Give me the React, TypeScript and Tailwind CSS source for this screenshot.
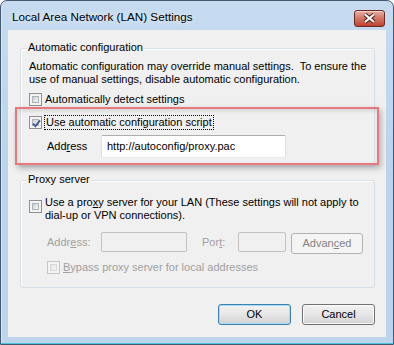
import type { ReactNode } from "react"

function CheckBox({ checked = false, disabled = false }: { checked?: boolean; disabled?: boolean }) {
  return (
    <span
      className={`relative flex h-[13px] w-[13px] shrink-0 items-center justify-center border bg-[#f4f4f4] p-[2px] ${
        disabled ? "border-[#c5c5c5]" : "border-[#8e8f8f]"
      }`}
    >
      <span
        className={`block h-full w-full border bg-gradient-to-br ${
          disabled
            ? "border-[#d8d8d8] from-[#e6e6e6] to-[#f6f6f6]"
            : "border-[#aeb3b9] from-[#cbcfd5] to-[#f6f6f6]"
        }`}
      />
      {checked && (
        <svg className="absolute left-[1px] top-[1px]" width="11" height="11" viewBox="0 0 11 11">
          <path d="M2 5.6 L4.4 8.2 L9 2.4" fill="none" stroke="#4a5f97" strokeWidth="1.9" />
        </svg>
      )}
    </span>
  )
}

function GroupBox({ title, height, children }: { title: string; height: string; children: ReactNode }) {
  return (
    <div
      className={`relative ml-[12px] w-[355px] rounded-[3px] border border-[#d5dfe5] shadow-[inset_1px_1px_0_#ffffff] ${height}`}
    >
      <span className="absolute -top-[8px] left-[6px] bg-[#f0f0f0] px-[1px] leading-[13px]">{title}</span>
      {children}
    </div>
  )
}

function WinButton({ label, focused = false }: { label: ReactNode; focused?: boolean }) {
  return (
    <div
      className={`flex h-[21px] w-[73px] items-center justify-center rounded-[3px] border bg-gradient-to-b from-[#f2f2f2] via-[#e6e6e6] to-[#d2d2d2] ${
        focused
          ? "border-[#3c7fb1] shadow-[inset_0_0_0_1px_#a6dcf6]"
          : "border-[#707070] shadow-[inset_0_0_0_1px_#fbfbfb]"
      }`}
    >
      {label}
    </div>
  )
}

export default function App() {
  return (
    <div className="h-[345px] w-[394px] bg-white font-['Liberation_Sans',Arial,sans-serif] text-[11px] text-black">
      <div className="flex h-[345px] w-[394px] flex-col rounded-t-[7px] border border-[#44586e] bg-gradient-to-b from-[#c6dbf0] via-[#bbd3eb] to-[#bcd4ec] shadow-[inset_0_-1px_0_#4cc3dc,inset_1px_0_0_#d8e7f5]">
        {/* title bar */}
        <div className="flex h-[29px] shrink-0 items-start justify-between">
          <span className="mt-[9px] pl-[11px] text-[11.7px] leading-[14px] [text-shadow:0_0_6px_#ffffff]">
            Local Area Network (LAN) Settings
          </span>
          <div className="mr-[8px] mt-[9px] h-[17px] w-[31px] rounded-[3px] border border-[#6b2a22] bg-gradient-to-b from-[#e4b0a6] via-[#d17565] to-[#c0402e] shadow-[inset_0_1px_0_#f2cfc8]">
            <svg width="29" height="15" viewBox="0 0 29 15">
              <path d="M10 3.5 L19 11 M19 3.5 L10 11" stroke="#4a1a14" strokeWidth="4.2" />
              <path d="M10 3.5 L19 11 M19 3.5 L10 11" stroke="#ffffff" strokeWidth="2.2" />
            </svg>
          </div>
        </div>

        {/* client area */}
        <div className="relative mx-[7px] h-[307px] bg-[#f0f0f0]">
          <div className="pt-[18px]">
            <GroupBox title="Automatic configuration" height="h-[119px]">
              <div className="mt-[11px] whitespace-nowrap pl-[8px] leading-[13px]">
                <div className="whitespace-pre">Automatic configuration may override manual settings.  To ensure the</div>
                <div>use of manual settings, disable automatic configuration.</div>
              </div>
              <div className="mt-[7px] flex h-[13px] items-center gap-[3px] pl-[8px] leading-[13px]">
                <CheckBox />
                <span>Automatically detect settings</span>
              </div>
              <div className="mt-[9px] flex h-[15px] items-center gap-[2px] pl-[8px] leading-[13px]">
                <CheckBox checked />
                <span className="border border-dotted border-black px-[1px]">Use automatic configuration script</span>
              </div>
              <div className="mt-[5px] flex h-[23px] items-center pl-[26px]">
                <span className="w-[54px]">
                  Add<span className="underline">r</span>ess
                </span>
                <div className="flex h-[23px] w-[185px] items-center rounded-[2px] border border-[#dbdfe6] border-t-[#abadb3] border-b-[#e3e9ef] bg-white pl-[5px]">
                  http://autoconfig/proxy.pac
                </div>
              </div>
            </GroupBox>

            <div className="mt-[13px]">
              <GroupBox title="Proxy server" height="h-[108px]">
                <div className="mt-[15px] flex items-start gap-[3px] pl-[8px] leading-[13px]">
                  <span className="mt-[4px]">
                    <CheckBox />
                  </span>
                  <div className="whitespace-nowrap">
                    <div>
                      Use a pro<span className="underline">x</span>y server for your LAN (These settings will not apply to
                    </div>
                    <div>dial-up or VPN connections).</div>
                  </div>
                </div>
                <div className="mt-[10px] flex h-[20px] items-start pl-[26px] text-[#a0a0a0]">
                  <span className="flex h-[20px] w-[54px] items-center">
                    Addr<span className="underline">e</span>ss:
                  </span>
                  <div className="h-[20px] w-[86px] rounded-[2px] border border-[#c2c2c2]" />
                  <span className="ml-[15px] flex h-[20px] w-[36px] items-center">
                    Por<span className="underline">t</span>:
                  </span>
                  <div className="h-[20px] w-[48px] rounded-[2px] border border-[#c2c2c2]" />
                  <div className="ml-[5px] mt-[1px] flex h-[21px] w-[72px] items-center justify-center rounded-[3px] border border-[#adb2b5] bg-[#f4f4f4] text-[#838383]">
                    Advan<span className="underline">c</span>ed
                  </div>
                </div>
                <div className="mt-[9px] flex h-[13px] items-center gap-[3px] pl-[26px] leading-[13px] text-[#a0a0a0]">
                  <CheckBox disabled />
                  <span>
                    <span className="underline">B</span>ypass proxy server for local addresses
                  </span>
                </div>
              </GroupBox>
            </div>

            <div className="mt-[16px] flex justify-end gap-[11px] pr-[11px]">
              <WinButton label="OK" focused />
              <WinButton label="Cancel" />
            </div>
          </div>

          {/* highlight drawn over the dialog */}
          <div className="absolute left-[7px] top-[77px] h-[58px] w-[364px] border-2 border-[#e9787d] shadow-[2px_3px_6px_rgba(0,0,0,0.28),inset_1px_2px_4px_rgba(0,0,0,0.12)]" />
        </div>
      </div>
    </div>
  )
}
